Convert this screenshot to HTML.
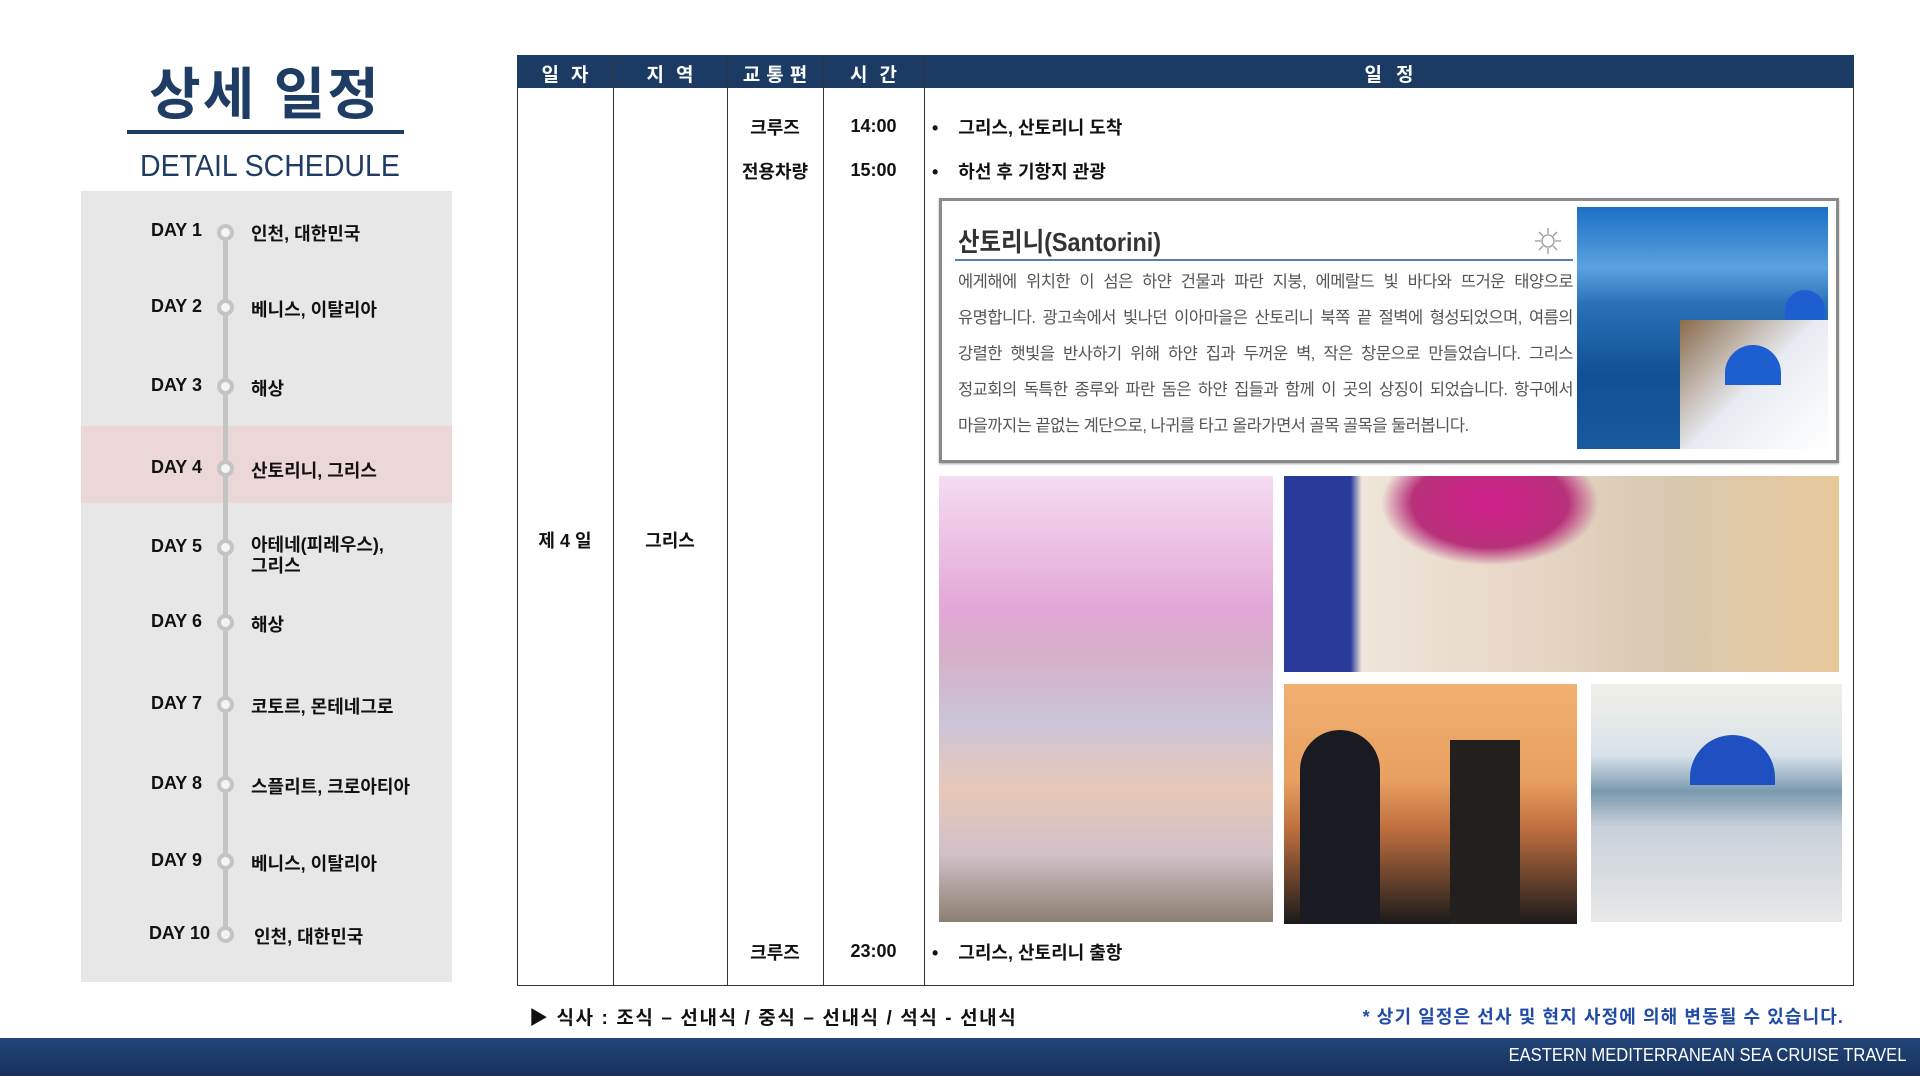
<!DOCTYPE html>
<html><head><meta charset="utf-8"><style>
*{margin:0;padding:0;box-sizing:border-box}
body{width:1920px;height:1076px;background:#fff;position:relative;overflow:hidden;font-family:"Liberation Sans","Noto Sans CJK KR",sans-serif;color:#111}
.a{position:absolute}
.t{white-space:nowrap}
.b{font-weight:bold}
.ln{display:block;white-space:nowrap;height:36px;width:615px;text-align:justify;text-align-last:justify}
</style></head><body>
<div class="a t b" style="left:140px;top:50px;width:250px;text-align:center;font-size:56px;color:#1f3c64;letter-spacing:2px">상세 일정</div>
<div class="a" style="left:127px;top:130px;width:277px;height:4px;background:#1f3c64"></div>
<div class="a t" style="left:140px;top:148px;font-size:31px;color:#1f3c64;transform:scaleX(.92);transform-origin:left">DETAIL SCHEDULE</div>

<div class="a" style="left:81px;top:191px;width:371px;height:791px;background:#e7e7e7"></div>
<div class="a" style="left:81px;top:426px;width:371px;height:77px;background:#ebd7d8"></div>
<div class="a" style="left:223px;top:231px;width:5px;height:703px;background:#c4c4c4"></div>

<div class="a" style="left:517px;top:55px;width:1337px;height:931px;border:1.5px solid #333"></div>
<div class="a" style="left:517px;top:55px;width:1337px;height:33px;background:#1b3a64"></div>
<div class="a" style="left:613px;top:55px;width:1px;height:931px;background:#333"></div>
<div class="a" style="left:727px;top:55px;width:1px;height:931px;background:#333"></div>
<div class="a" style="left:823px;top:55px;width:1px;height:931px;background:#333"></div>
<div class="a" style="left:924px;top:55px;width:1px;height:931px;background:#333"></div>
<div class="a t b" style="left:517px;top:60px;width:96px;text-align:center;color:#fff;font-size:19px;letter-spacing:12px;padding-left:12px">일자</div>
<div class="a t b" style="left:613px;top:60px;width:114px;text-align:center;color:#fff;font-size:19px;letter-spacing:12px;padding-left:12px">지역</div>
<div class="a t b" style="left:727px;top:60px;width:96px;text-align:center;color:#fff;font-size:19px;letter-spacing:6px;padding-left:6px">교통편</div>
<div class="a t b" style="left:823px;top:60px;width:101px;text-align:center;color:#fff;font-size:19px;letter-spacing:12px;padding-left:12px">시간</div>
<div class="a t b" style="left:924px;top:60px;width:930px;text-align:center;color:#fff;font-size:19px;letter-spacing:14px;padding-left:14px">일정</div>

<div class="a t b" style="left:517px;top:527px;width:96px;text-align:center;font-size:18px">제 4 일</div>
<div class="a t b" style="left:613px;top:527px;width:114px;text-align:center;font-size:18px">그리스</div>

<div class="a t b" style="left:727px;top:114px;width:96px;text-align:center;font-size:18px">크루즈</div>
<div class="a t b" style="left:823px;top:116px;width:101px;text-align:center;font-size:18px">14:00</div>
<div class="a t b" style="left:932px;top:114px;font-size:18px">•&nbsp;&nbsp;&nbsp;&nbsp;그리스, 산토리니 도착</div>
<div class="a t b" style="left:727px;top:158px;width:96px;text-align:center;font-size:18px">전용차량</div>
<div class="a t b" style="left:823px;top:160px;width:101px;text-align:center;font-size:18px">15:00</div>
<div class="a t b" style="left:932px;top:158px;font-size:18px">•&nbsp;&nbsp;&nbsp;&nbsp;하선 후 기항지 관광</div>
<div class="a t b" style="left:727px;top:939px;width:96px;text-align:center;font-size:18px">크루즈</div>
<div class="a t b" style="left:823px;top:941px;width:101px;text-align:center;font-size:18px">23:00</div>
<div class="a t b" style="left:932px;top:939px;font-size:18px">•&nbsp;&nbsp;&nbsp;&nbsp;그리스, 산토리니 출항</div>

<div class="a" style="left:939px;top:198px;width:900px;height:265px;border:3px solid #8a8a8a;box-shadow:0 1px 2px #aaa"></div>
<div class="a t b" style="left:958px;top:222px;font-size:26px;color:#333;transform:scaleX(.9);transform-origin:left">산토리니(Santorini)</div>
<div class="a" style="left:955px;top:259px;width:618px;height:2px;background:#5a7bb0"></div>
<svg class="a" style="left:1533px;top:226px" width="30" height="30" viewBox="0 0 30 30" fill="none" stroke="#999" stroke-width="1.3"><circle cx="15" cy="15" r="6"/><path d="M15 2v6M15 22v6M2 15h6M22 15h6M6 6l4 4M20 20l4 4M24 6l-4 4M6 24l4-4"/></svg>
<div class="a" style="left:958px;top:264px;font-size:16.5px;line-height:36px;color:#555;letter-spacing:-.5px">
<span class="ln">에게해에 위치한 이 섬은 하얀 건물과 파란 지붕, 에메랄드 빛 바다와 뜨거운 태양으로</span>
<span class="ln">유명합니다. 광고속에서 빛나던 이아마을은 산토리니 북쪽 끝 절벽에 형성되었으며, 여름의</span>
<span class="ln">강렬한 햇빛을 반사하기 위해 하얀 집과 두꺼운 벽, 작은 창문으로 만들었습니다. 그리스</span>
<span class="ln">정교회의 독특한 종루와 파란 돔은 하얀 집들과 함께 이 곳의 상징이 되었습니다. 항구에서</span>
<span class="ln" style="text-align-last:left">마을까지는 끝없는 계단으로, 나귀를 타고 올라가면서 골목 골목을 둘러봅니다.</span>
</div>
<div class="a" style="left:1577px;top:207px;width:251px;height:242px;background:linear-gradient(180deg,#1b6fc4 0%,#5aa2e0 25%,#2a72b8 40%,#0f4f95 70%,#1a5aa0 100%)"></div>
<div class="a" style="left:1680px;top:320px;width:148px;height:129px;background:linear-gradient(135deg,#8a6a4a,#e8ecf2 50%,#fff)"></div>
<div class="a" style="left:1725px;top:345px;width:56px;height:40px;border-radius:28px 28px 0 0;background:#1d5fd0"></div>
<div class="a" style="left:1785px;top:290px;width:40px;height:30px;border-radius:20px 20px 0 0;background:#1d5fd0"></div>

<div class="a" style="left:939px;top:476px;width:334px;height:446px;background:linear-gradient(180deg,#f5dcef 0%,#e2a7d8 30%,#d6b0c8 40%,#c9c5d8 55%,#e8c8b8 70%,#d0c0c8 85%,#8a8070 100%)"></div>
<div class="a" style="left:1284px;top:476px;width:555px;height:196px;background:linear-gradient(90deg,#2a3a9a 0%,#2a3a9a 12%,#eee6da 14%,#e8d8c8 40%,#d8c8b0 70%,#e8c89a 100%)"></div>
<div class="a" style="left:1380px;top:476px;width:220px;height:90px;background:radial-gradient(ellipse at 50% 30%,#d0208a,#b8307a 50%,transparent 70%)"></div>
<div class="a" style="left:1284px;top:684px;width:293px;height:240px;background:linear-gradient(180deg,#f0b070 0%,#e8a060 40%,#c07040 60%,#1a1a1a 100%)"></div>
<div class="a" style="left:1300px;top:730px;width:80px;height:194px;background:#1a1a22;border-radius:40px 40px 0 0"></div>
<div class="a" style="left:1450px;top:740px;width:70px;height:184px;background:#22201e"></div>
<div class="a" style="left:1591px;top:684px;width:251px;height:238px;background:linear-gradient(180deg,#f2efe8 0%,#d8e2ea 30%,#7a9ab0 45%,#c8d0d8 60%,#e8e8e8 100%)"></div>
<div class="a" style="left:1690px;top:735px;width:85px;height:50px;border-radius:43px 43px 0 0;background:#1f4fc0"></div>

<div class="a t b" style="left:529px;top:1003px;font-size:19px;letter-spacing:1.6px">▶ 식사 : 조식 – 선내식 / 중식 – 선내식 / 석식 - 선내식</div>
<div class="a t b" style="right:76px;top:1003px;font-size:18px;color:#1f4aa8;letter-spacing:1.1px">* 상기 일정은 선사 및 현지 사정에 의해 변동될 수 있습니다.</div>
<div class="a" style="left:0;top:1038px;width:1920px;height:38px;background:linear-gradient(180deg,#24467a,#15305a)"></div>
<div class="a t" style="right:14px;top:1045px;font-size:18px;color:#fff;transform:scaleX(.92);transform-origin:right">EASTERN MEDITERRANEAN SEA CRUISE TRAVEL</div>

<div class="a" style="left:0;top:0">
<div class="a t b" style="left:120px;top:220px;width:82px;text-align:right;font-size:18px">DAY 1</div><div class="a" style="left:217px;top:224px;width:17px;height:17px;border-radius:50%;border:4px solid #c4c4c4;background:#f4f4f4"></div><div class="a t b" style="left:251px;top:220px;font-size:18px">인천, 대한민국</div>
<div class="a t b" style="left:120px;top:296px;width:82px;text-align:right;font-size:18px">DAY 2</div><div class="a" style="left:217px;top:299px;width:17px;height:17px;border-radius:50%;border:4px solid #c4c4c4;background:#f4f4f4"></div><div class="a t b" style="left:251px;top:296px;font-size:18px">베니스, 이탈리아</div>
<div class="a t b" style="left:120px;top:375px;width:82px;text-align:right;font-size:18px">DAY 3</div><div class="a" style="left:217px;top:378px;width:17px;height:17px;border-radius:50%;border:4px solid #c4c4c4;background:#f4f4f4"></div><div class="a t b" style="left:251px;top:375px;font-size:18px">해상</div>
<div class="a t b" style="left:120px;top:457px;width:82px;text-align:right;font-size:18px">DAY 4</div><div class="a" style="left:217px;top:460px;width:17px;height:17px;border-radius:50%;border:4px solid #c4c4c4;background:#f4f4f4"></div><div class="a t b" style="left:251px;top:457px;font-size:18px">산토리니, 그리스</div>
<div class="a t b" style="left:120px;top:536px;width:82px;text-align:right;font-size:18px">DAY 5</div><div class="a" style="left:217px;top:539px;width:17px;height:17px;border-radius:50%;border:4px solid #c4c4c4;background:#f4f4f4"></div><div class="a t b" style="left:251px;top:535px;font-size:18px;line-height:21px">아테네(피레우스),<br>그리스</div>
<div class="a t b" style="left:120px;top:611px;width:82px;text-align:right;font-size:18px">DAY 6</div><div class="a" style="left:217px;top:614px;width:17px;height:17px;border-radius:50%;border:4px solid #c4c4c4;background:#f4f4f4"></div><div class="a t b" style="left:251px;top:611px;font-size:18px">해상</div>
<div class="a t b" style="left:120px;top:693px;width:82px;text-align:right;font-size:18px">DAY 7</div><div class="a" style="left:217px;top:696px;width:17px;height:17px;border-radius:50%;border:4px solid #c4c4c4;background:#f4f4f4"></div><div class="a t b" style="left:251px;top:693px;font-size:18px">코토르, 몬테네그로</div>
<div class="a t b" style="left:120px;top:773px;width:82px;text-align:right;font-size:18px">DAY 8</div><div class="a" style="left:217px;top:776px;width:17px;height:17px;border-radius:50%;border:4px solid #c4c4c4;background:#f4f4f4"></div><div class="a t b" style="left:251px;top:773px;font-size:18px">스플리트, 크로아티아</div>
<div class="a t b" style="left:120px;top:850px;width:82px;text-align:right;font-size:18px">DAY 9</div><div class="a" style="left:217px;top:853px;width:17px;height:17px;border-radius:50%;border:4px solid #c4c4c4;background:#f4f4f4"></div><div class="a t b" style="left:251px;top:850px;font-size:18px">베니스, 이탈리아</div>
<div class="a t b" style="left:120px;top:923px;width:90px;text-align:right;font-size:18px">DAY 10</div><div class="a" style="left:217px;top:926px;width:17px;height:17px;border-radius:50%;border:4px solid #c4c4c4;background:#f4f4f4"></div><div class="a t b" style="left:254px;top:923px;font-size:18px">인천, 대한민국</div>
</div>
</body></html>
